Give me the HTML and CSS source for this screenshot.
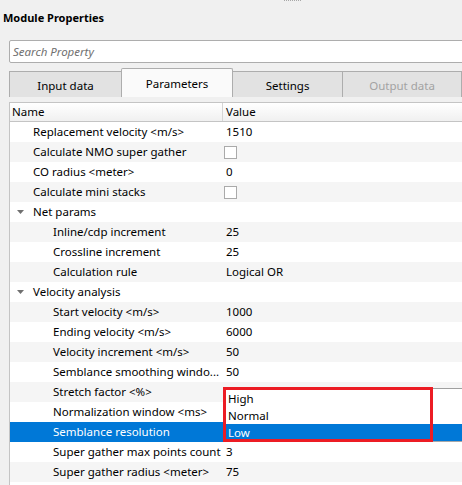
FILE: index.html
```html
<!DOCTYPE html>
<html>
<head>
<meta charset="utf-8">
<link rel="stylesheet" href="styles.css">
</head>
<body>
<div class="panel">
  <div class="handle"></div>
  <div class="title">Module Properties</div>
  <div class="search">Search Property</div>
  <div class="tabs">
    <div class="tab t1">Input data</div>
    <div class="tab t2 active">Parameters</div>
    <div class="tab t3">Settings</div>
    <div class="tab t4 disabled">Output data</div>
  </div>
  <div class="tree">
    <div class="head">
      <div class="hname">Name</div>
      <div class="hval">Value</div>
    </div>
    <div class="row"><div class="name l1">Replacement velocity &lt;m/s&gt;</div><div class="val">1510</div></div>
    <div class="row alt"><div class="name l1">Calculate NMO super gather</div><div class="val"><span class="check"></span></div></div>
    <div class="row"><div class="name l1">CO radius &lt;meter&gt;</div><div class="val">0</div></div>
    <div class="row alt"><div class="name l1">Calculate mini stacks</div><div class="val"><span class="check"></span></div></div>
    <div class="row"><div class="name group"><svg class="arrow" width="7" height="4" viewBox="0 0 7 4"><path d="M0 0H7L3.5 4Z" fill="#707070"/></svg>Net params</div><div class="val"></div></div>
    <div class="row alt"><div class="name l2">Inline/cdp increment</div><div class="val">25</div></div>
    <div class="row"><div class="name l2">Crossline increment</div><div class="val">25</div></div>
    <div class="row alt"><div class="name l2">Calculation rule</div><div class="val">Logical OR</div></div>
    <div class="row"><div class="name group"><svg class="arrow" width="7" height="4" viewBox="0 0 7 4"><path d="M0 0H7L3.5 4Z" fill="#707070"/></svg>Velocity analysis</div><div class="val"></div></div>
    <div class="row alt"><div class="name l2">Start velocity &lt;m/s&gt;</div><div class="val">1000</div></div>
    <div class="row"><div class="name l2">Ending velocity &lt;m/s&gt;</div><div class="val">6000</div></div>
    <div class="row alt"><div class="name l2">Velocity increment &lt;m/s&gt;</div><div class="val">50</div></div>
    <div class="row"><div class="name l2">Semblance smoothing windo...</div><div class="val">50</div></div>
    <div class="row alt"><div class="name l2">Stretch factor &lt;%&gt;</div><div class="val"></div></div>
    <div class="row"><div class="name l2">Normalization window &lt;ms&gt;</div><div class="val"></div></div>
    <div class="row sel"><div class="name l2">Semblance resolution</div><div class="val"></div></div>
    <div class="row"><div class="name l2">Super gather max points count</div><div class="val">3</div></div>
    <div class="row alt"><div class="name l2">Super gather radius &lt;meter&gt;</div><div class="val">75</div></div>
    <div class="row"><div class="name l2"></div><div class="val"></div></div>
    <div class="popup">
      <div class="opt">High</div>
      <div class="opt">Normal</div>
      <div class="opt cur">Low</div>
    </div>
    <div class="mark"></div>
  </div>
</div>
</body>
</html>
```
FILE: styles.css
```css
html, body {
  margin: 0;
  padding: 0;
  background: #f0f0f0;
  overflow: hidden;
}
body {
  width: 462px;
  height: 485px;
  font-family: "Noto Sans", "Open Sans", sans-serif;
  font-size: 11.5px;
  color: #000;
}
.panel {
  position: relative;
  display: flex;
  flex-direction: column;
  width: 462px;
}
.handle {
  position: absolute;
  left: 284px;
  top: 0;
  width: 17px;
  height: 0;
  border-top: 1px dotted #a8a8a8;
}
.title {
  height: 40px;
  box-sizing: border-box;
  padding: 10px 0 0 3px;
  line-height: 16px;
  font-weight: bold;
  font-size: 11px;
}
.search {
  margin-left: 9px;
  margin-right: -6px;
  height: 23px;
  box-sizing: border-box;
  border: 1px solid #adadad;
  border-radius: 2px;
  background: #fff;
  color: #707070;
  font-style: italic;
  padding-left: 3px;
  line-height: 21px;
}
.tabs {
  display: flex;
  align-items: flex-end;
  margin-top: 5px;
  margin-left: 9px;
  height: 29px;
}
.tab {
  box-sizing: border-box;
  height: 26px;
  border: 1px solid #adadad;
  border-bottom: none;
  background: #e2e2e2;
  display: flex;
  align-items: center;
  justify-content: center;
  padding-top: 1px;
}
.tab + .tab {
  margin-left: -1px;
}
.t1 { width: 115px; }
.t2 { width: 114px; }
.t3 { width: 113px; }
.t4 { width: 122px; }
.tab.active {
  height: 29px;
  background: #fafafa;
  border-radius: 2px 2px 0 0;
  position: relative;
  z-index: 1;
  padding-top: 0;
}
.tab.disabled {
  color: #a3a3a3;
}
.tree {
  position: relative;
  margin-top: 5px;
  margin-left: 9px;
  border-left: 1px solid #c4c4c4;
  background: #fff;
  height: 383px;
}
.head {
  display: grid;
  grid-template-columns: 213px 1fr;
  height: 20px;
  box-sizing: border-box;
  border-top: 1px solid #c4c4c4;
  border-bottom: 1px solid #c4c4c4;
  background: linear-gradient(#ffffff, #f0f0f0);
  line-height: 18px;
}
.hname {
  padding-left: 2px;
  border-right: 1px solid #d5d5d5;
}
.hval {
  padding-left: 3px;
}
.row {
  display: grid;
  grid-template-columns: 213px 1fr;
  height: 20px;
  line-height: 20px;
  background: #fff;
}
.row.alt {
  background: #f5f5f5;
}
.row.sel {
  background: #0078d7;
  color: #fff;
}
.name {
  white-space: nowrap;
  overflow: hidden;
}
.l1 { padding-left: 23px; }
.l2 { padding-left: 43px; }
.group {
  padding-left: 7px;
  display: flex;
  align-items: center;
}
.arrow {
  margin-right: 9px;
}
.val {
  padding-left: 3px;
  white-space: nowrap;
  display: flex;
  align-items: center;
}
.check {
  display: block;
  width: 13px;
  height: 13px;
  box-sizing: border-box;
  border: 1px solid #aaaaaa;
  background: #fff;
  margin-left: -2px;
}
.popup {
  position: absolute;
  left: 215px;
  top: 286px;
  right: -4px;
  height: 54px;
  box-sizing: border-box;
  background: #fff;
  border-top: 1px solid #a0a0a0;
  border-bottom: 2px solid #a8a8a8;
  padding-top: 1px;
}
.opt {
  height: 17px;
  line-height: 17px;
  padding-left: 3px;
}
.opt.cur {
  background: #0078d7;
  color: #fff;
}
.mark {
  position: absolute;
  left: 213px;
  top: 285px;
  width: 210px;
  height: 55px;
  box-sizing: border-box;
  border: 3px solid #ec1c24;
}
```
